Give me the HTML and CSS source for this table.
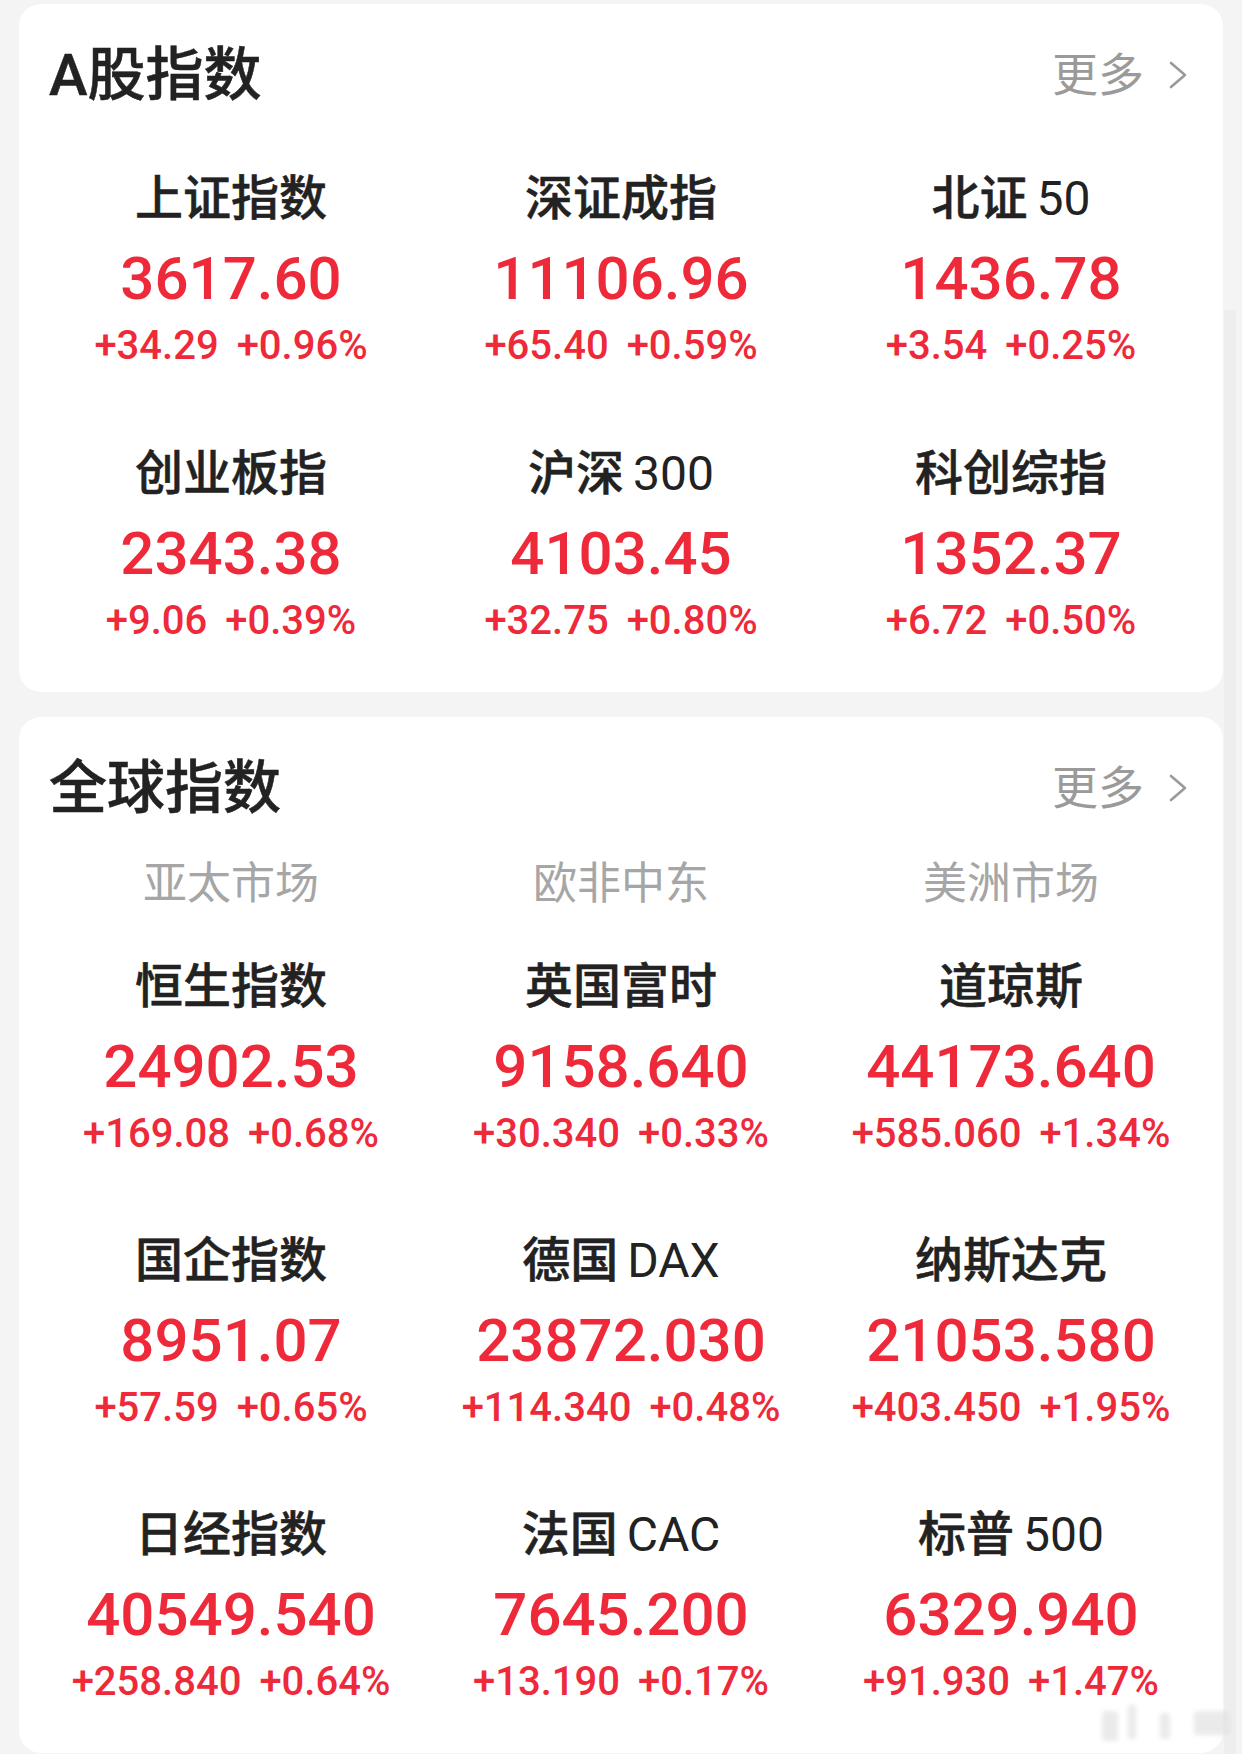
FILE: index.html
```html
<!DOCTYPE html>
<html lang="zh-CN">
<head>
<meta charset="utf-8">
<title>指数</title>
<link rel="stylesheet" href="styles.css">
</head>
<body>
<div class="page">
  <section class="card">
    <header class="card-head">
      <h2 class="card-title">A股指数</h2>
      <a class="more">更多<svg class="chev" viewBox="0 0 20 30" width="20" height="30"><polyline points="3,3 17,15 3,27" fill="none" stroke="#9a9a9a" stroke-width="2.6" stroke-linecap="round" stroke-linejoin="round"/></svg></a>
    </header>
    <div class="grid">
      <div class="cell"><div class="name">上证指数</div><div class="value">3617.60</div><div class="change"><span>+34.29</span><span>+0.96%</span></div></div>
      <div class="cell"><div class="name">深证成指</div><div class="value">11106.96</div><div class="change"><span>+65.40</span><span>+0.59%</span></div></div>
      <div class="cell"><div class="name">北证<span class="lat">50</span></div><div class="value">1436.78</div><div class="change"><span>+3.54</span><span>+0.25%</span></div></div>
      <div class="cell"><div class="name">创业板指</div><div class="value">2343.38</div><div class="change"><span>+9.06</span><span>+0.39%</span></div></div>
      <div class="cell"><div class="name">沪深<span class="lat">300</span></div><div class="value">4103.45</div><div class="change"><span>+32.75</span><span>+0.80%</span></div></div>
      <div class="cell"><div class="name">科创综指</div><div class="value">1352.37</div><div class="change"><span>+6.72</span><span>+0.50%</span></div></div>
    </div>
  </section>
  <section class="card card-global">
    <header class="card-head">
      <h2 class="card-title">全球指数</h2>
      <a class="more">更多<svg class="chev" viewBox="0 0 20 30" width="20" height="30"><polyline points="3,3 17,15 3,27" fill="none" stroke="#9a9a9a" stroke-width="2.6" stroke-linecap="round" stroke-linejoin="round"/></svg></a>
    </header>
    <div class="tabs"><div>亚太市场</div><div>欧非中东</div><div>美洲市场</div></div>
    <div class="grid">
      <div class="cell"><div class="name">恒生指数</div><div class="value">24902.53</div><div class="change"><span>+169.08</span><span>+0.68%</span></div></div>
      <div class="cell"><div class="name">英国富时</div><div class="value">9158.640</div><div class="change"><span>+30.340</span><span>+0.33%</span></div></div>
      <div class="cell"><div class="name">道琼斯</div><div class="value">44173.640</div><div class="change"><span>+585.060</span><span>+1.34%</span></div></div>
      <div class="cell"><div class="name">国企指数</div><div class="value">8951.07</div><div class="change"><span>+57.59</span><span>+0.65%</span></div></div>
      <div class="cell"><div class="name">德国<span class="lat">DAX</span></div><div class="value">23872.030</div><div class="change"><span>+114.340</span><span>+0.48%</span></div></div>
      <div class="cell"><div class="name">纳斯达克</div><div class="value">21053.580</div><div class="change"><span>+403.450</span><span>+1.95%</span></div></div>
      <div class="cell"><div class="name">日经指数</div><div class="value">40549.540</div><div class="change"><span>+258.840</span><span>+0.64%</span></div></div>
      <div class="cell"><div class="name">法国<span class="lat">CAC</span></div><div class="value">7645.200</div><div class="change"><span>+13.190</span><span>+0.17%</span></div></div>
      <div class="cell"><div class="name">标普<span class="lat">500</span></div><div class="value">6329.940</div><div class="change"><span>+91.930</span><span>+1.47%</span></div></div>
    </div>
  </section>
</div>
<div class="scroll-track"></div>
<div class="watermark"><i class="wm-a"></i><i class="wm-b"></i><i class="wm-c"></i><i class="wm-d"></i></div>
</body>
</html>
```
FILE: styles.css
```css
html, body {
  margin: 0;
  background: #f4f4f4;
}
body {
  font-family: Roboto, "Noto Sans CJK SC", sans-serif;
  position: relative;
  min-height: 1754px;
  overflow: hidden;
}
.page {
  padding: 4px 19px 0;
  display: flex;
  flex-direction: column;
  gap: 25px;
}
.card {
  background: #fff;
  border-radius: 22px;
  padding: 36px 17px 49px;
}
.card-head {
  height: 70px;
  display: flex;
  align-items: center;
  justify-content: space-between;
  padding: 0 18px 0 13px;
}
.card-title {
  margin: 0;
  font-size: 58px;
  line-height: 70px;
  font-weight: 500;
  color: #222;
  -webkit-text-stroke: 0.5px #222;
}
.more {
  display: flex;
  align-items: center;
  gap: 24px;
  font-size: 46px;
  line-height: 60px;
  color: #9a9a9a;
}
.chev {
  display: block;
}
.tabs {
  display: grid;
  grid-template-columns: repeat(3, 1fr);
  margin-top: 36px;
  font-size: 44px;
  line-height: 50px;
  color: #a6a6a6;
  text-align: center;
}
.grid {
  display: grid;
  grid-template-columns: repeat(3, 1fr);
  row-gap: 78px;
  margin-top: 61px;
}
.card-global .grid {
  margin-top: 50px;
  row-gap: 77px;
}
.cell {
  display: flex;
  flex-direction: column;
  align-items: center;
}
.name {
  font-size: 48px;
  line-height: 56px;
  font-weight: 500;
  color: #222;
  white-space: nowrap;
  -webkit-text-stroke: 0.5px #222;
}
.lat {
  margin-left: 9px;
  font-weight: 400;
  -webkit-text-stroke: 0;
}
.value {
  margin-top: 20px;
  font-size: 60px;
  line-height: 64px;
  font-weight: 500;
  color: #ee2a3a;
  white-space: nowrap;
}
.change {
  margin-top: 13px;
  display: flex;
  gap: 18px;
  font-size: 40px;
  line-height: 44px;
  font-weight: 500;
  color: #ee2a3a;
  white-space: nowrap;
}
.scroll-track {
  position: absolute;
  left: 1224px;
  top: 310px;
  width: 12px;
  bottom: 0;
  background: #eeeeee;
}
.watermark {
  position: absolute;
  left: 1098px;
  top: 1703px;
  width: 140px;
  height: 40px;
  filter: blur(2px);
  opacity: 0.7;
}
.watermark i {
  position: absolute;
  background: #e2e2e2;
  border-radius: 3px;
}
.wm-a { left: 4px; top: 8px; width: 16px; height: 30px; }
.wm-b { left: 30px; top: 2px; width: 8px; height: 34px; }
.wm-c { left: 62px; top: 10px; width: 10px; height: 26px; }
.wm-d { left: 96px; top: 8px; width: 36px; height: 24px; }
```
